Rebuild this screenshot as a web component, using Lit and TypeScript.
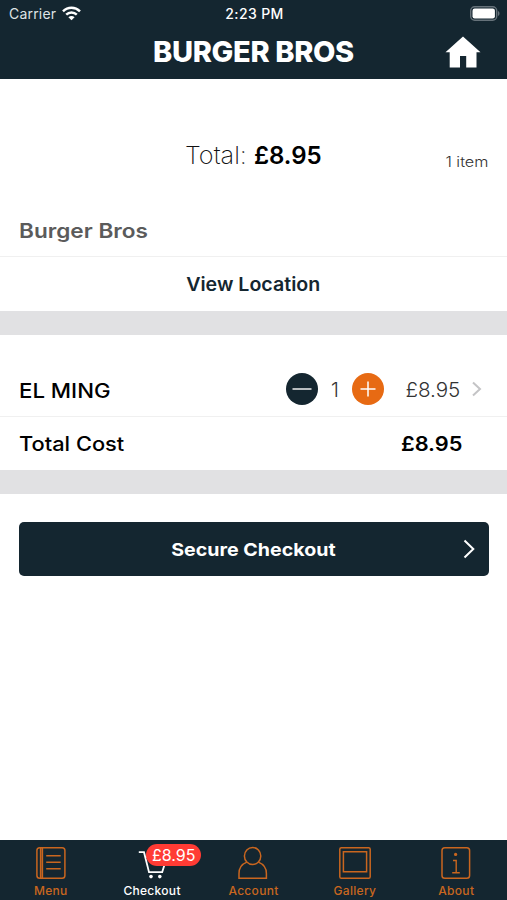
import { LitElement, html, svg, css } from "lit";
import { customElement } from "lit/decorators.js";

const icons: Record<string, unknown> = {
  menu: svg`<rect x="4.9" y="2.7" width="28" height="30.6" rx="2.8"/><path d="M8.6 3v30M10.4 3v30M14.2 10.7h14.5M14.2 17.3h14.5M14.2 23.8h14.5"/>`,
  cart: svg`<path d="M5.8 7.2h5.2l5 19.9h13.2l4.2-13.4" stroke-width="1.8"/><path d="M13 12h22"/><circle cx="18" cy="31.6" r="1.8" fill="currentColor" stroke="none"/><circle cx="26.8" cy="31.6" r="1.8" fill="currentColor" stroke="none"/>`,
  account: svg`<ellipse cx="18.6" cy="11" rx="8.2" ry="8.5"/><path d="M12.8 17.1C7.6 19.2 5 23.2 5 28.4v4.9h27.4v-4.9c0-5.2-2.8-9.2-8-11.3"/>`,
  gallery: svg`<rect x="3.8" y="2.7" width="30.4" height="30.6" rx="1.6"/><path d="M7.4 6.8h23.2v20H7.4z"/>`,
  about: svg`<rect x="5" y="2.7" width="27.6" height="30.6" rx="2.8"/><path d="M16 15.5h3.2v12M15.2 27.7h7.6" stroke-width="1.4"/><circle cx="18.6" cy="9.4" r="1.6" fill="currentColor" stroke="none"/>`,
};

const tabs = [
  { label: "Menu", icon: "menu" },
  { label: "Checkout", icon: "cart", badge: "£8.95" },
  { label: "Account", icon: "account" },
  { label: "Gallery", icon: "gallery" },
  { label: "About", icon: "about" },
];

@customElement("app-tab-bar")
class AppTabBar extends LitElement {
  static styles = css`
    :host { display: grid; grid-template-columns: repeat(5, 1fr); height: 60px; background: #142630; color: #c9661f; box-sizing: border-box; }
    .tab { display: flex; flex-direction: column; align-items: center; padding-top: 5px; position: relative; font-size: 12px; font-weight: 500; letter-spacing: .3px; line-height: 16px; }
    .active { color: #fff; }
    .icon { width: 38px; height: 36px; display: block; fill: none; stroke: currentColor; stroke-width: 1.5; }
    .label { margin-top: 2px; }
    .badge { position: absolute; left: 44.5px; top: 3.5px; width: 55.5px; height: 22.5px; border-radius: 12px; background: #ff3b34; color: #fff; display: flex; align-items: center; justify-content: center; font-size: 16px; font-weight: 400; letter-spacing: 0; }
  `;
  render() {
    return tabs.map((t) => html`
      <div class="tab ${t.badge ? "active" : ""}">
        <svg class="icon" viewBox="0 0 38 36">${icons[t.icon]}</svg>
        ${t.badge ? html`<span class="badge">${t.badge}</span>` : ""}
        <span class="label">${t.label}</span>
      </div>`);
  }
}

@customElement("app-root")
class AppRoot extends LitElement {
  static styles = css`
    :host { display: flex; flex-direction: column; height: 900px; width: 507px; background: #fff; color: #000; font-family: Inter, "Liberation Sans", sans-serif; overflow: hidden; }
    * { box-sizing: border-box; }
    header { height: 79px; background: #142630; color: #fff; }
    .status { height: 27px; display: grid; grid-template-columns: 1fr auto 1fr; align-items: center; padding: 0 7px 0 9px; font-size: 14px; }
    .carrier { display: flex; align-items: center; gap: 6px; color: #dfe3e5; letter-spacing: .2px; }
    .time { font-weight: 500; letter-spacing: .4px; }
    .battery { justify-self: end; display: block; }
    .nav { height: 50px; display: grid; grid-template-columns: 1fr auto 1fr; align-items: center; padding: 0 26px; }
    h1 { margin: 0; grid-column: 2; font-size: 29px; font-weight: 800; letter-spacing: -.35px; line-height: 50px; }
    .home { justify-self: end; display: block; }
    .wide { display: inline-block; transform: scaleX(1.09); transform-origin: left; }
    .mid { transform-origin: center; }
    .end { transform-origin: right; }
    .summary { height: 124px; display: grid; grid-template-columns: 1fr auto 1fr; align-items: center; padding: 28px 19px 0; }
    .total { grid-column: 2; font-size: 24px; font-weight: 250; color: #111; white-space: nowrap; padding-left: 3px; }
    .total .wide { transform: scaleX(1.05); transform-origin: right; }
    .total b { display: inline-block; font-weight: 600; color: #000; }
    .count { justify-self: end; font-size: 14.5px; font-weight: 300; color: #333; padding-top: 13px; }
    .count .wide { transform: scaleX(1.12); }
    .store { height: 54px; display: flex; align-items: center; padding: 2px 19px 0; font-size: 20px; font-weight: 600; color: #5b5b5b; border-bottom: 1px solid #f0f0f0; }
    .store .wide { transform: scaleX(1.13); }
    .location { height: 54px; display: flex; align-items: center; justify-content: center; font-size: 18.5px; font-weight: 600; color: #142630; }
    .location .wide { transform: scaleX(1.06); }
    .band { height: 24px; background: #e1e1e3; }
    .item { height: 82px; display: flex; align-items: center; padding: 27px 24px 0 19px; font-size: 20px; border-bottom: 1px solid #f0f0f0; }
    .name { flex: 1; font-weight: 550; }
    .name .wide { transform: scaleX(1.11); padding-top: 3px; }
    .qty { width: 34px; text-align: center; font-weight: 300; color: #333; padding-top: 2px; }
    .step { display: block; }
    .price { width: 76px; text-align: right; font-weight: 300; color: #333; padding-top: 2px; }
    .price .wide { transform: scaleX(1.03); }
    .arrow { display: block; margin-left: 11px; }
    .cost { height: 53px; display: flex; align-items: center; justify-content: space-between; padding: 0 45px 0 19px; font-size: 20px; font-weight: 550; }
    .cost b { font-weight: 600; }
    .checkout { margin: 28px 18.5px 0 19px; height: 53.5px; border-radius: 5px; background: #142630; color: #fff; display: grid; grid-template-columns: 1fr auto 1fr; align-items: center; padding: 0 14px; font-size: 18px; font-weight: 650; }
    .checkout .text { grid-column: 2; padding-top: 1px; }
    .checkout svg { justify-self: end; }
    app-tab-bar { margin-top: auto; }
  `;
  render() {
    return html`
      <header>
        <div class="status">
          <span class="carrier"><span>Carrier</span>
            <svg width="19" height="15" viewBox="0 0 19 15" fill="none" stroke="#fff" stroke-width="2.5"><path d="M1 5.3C5.8.6 13.2.6 18 5.3M4.2 8.7C7.2 5.8 11.8 5.8 14.8 8.7"/><path d="M9.5 14.3 6.4 11.2C8.1 9.5 10.9 9.5 12.6 11.2Z" fill="#fff" stroke="none"/></svg>
          </span>
          <span class="time">2:23 PM</span>
          <svg class="battery" width="30" height="15" viewBox="0 0 30 15"><rect x=".7" y=".7" width="26" height="13.6" rx="4" fill="none" stroke="#66727a" stroke-width="1.4"/><rect x="2.5" y="2.5" width="22.4" height="10" rx="2.2" fill="#fff"/><path d="M28 5v5c2-.8 2-4.2 0-5z" fill="#66727a"/></svg>
        </div>
        <div class="nav">
          <h1>BURGER BROS</h1>
          <svg class="home" width="36" height="32" viewBox="0 0 36 32"><path d="M18 .5 35.5 16.2H31.5V31.5H21.2V20H15V31.5H4.7V16.2H.5Z" fill="#fff"/></svg>
        </div>
      </header>
      <section class="summary">
        <div class="total"><span class="wide">Total:</span> <b>£8.95</b></div>
        <div class="count"><span class="wide end">1 item</span></div>
      </section>
      <div class="store"><span class="wide">Burger Bros</span></div>
      <div class="location"><span class="wide mid">View Location</span></div>
      <div class="band"></div>
      <div class="item">
        <span class="name"><span class="wide">EL MING</span></span>
        <svg class="step" width="32" height="32" viewBox="0 0 32 32"><circle cx="16" cy="16" r="16" fill="#142630"/><path d="M6.5 16h19" stroke="#fff" stroke-width="1.4"/></svg>
        <span class="qty">1</span>
        <svg class="step" width="32" height="32" viewBox="0 0 32 32"><circle cx="16" cy="16" r="16" fill="#e76a13"/><path d="M8.5 16h15M16 8.5v15" stroke="#fff" stroke-width="1.5"/></svg>
        <span class="price"><span class="wide end">£8.95</span></span>
        <svg class="arrow" width="12" height="16" viewBox="0 0 12 16" fill="none" stroke="#c4c4c6" stroke-width="2"><path d="m2 1.5 7 6.5-7 6.5"/></svg>
      </div>
      <div class="cost"><span class="wide">Total Cost</span><b class="wide end">£8.95</b></div>
      <div class="band"></div>
      <div class="checkout"><span class="text wide mid">Secure Checkout</span>
        <svg width="12" height="20" viewBox="0 0 12 20" fill="none" stroke="#fff" stroke-width="2"><path d="m1.5 1.5 8.8 8.5-8.8 8.5"/></svg>
      </div>
      <app-tab-bar></app-tab-bar>
    `;
  }
}
